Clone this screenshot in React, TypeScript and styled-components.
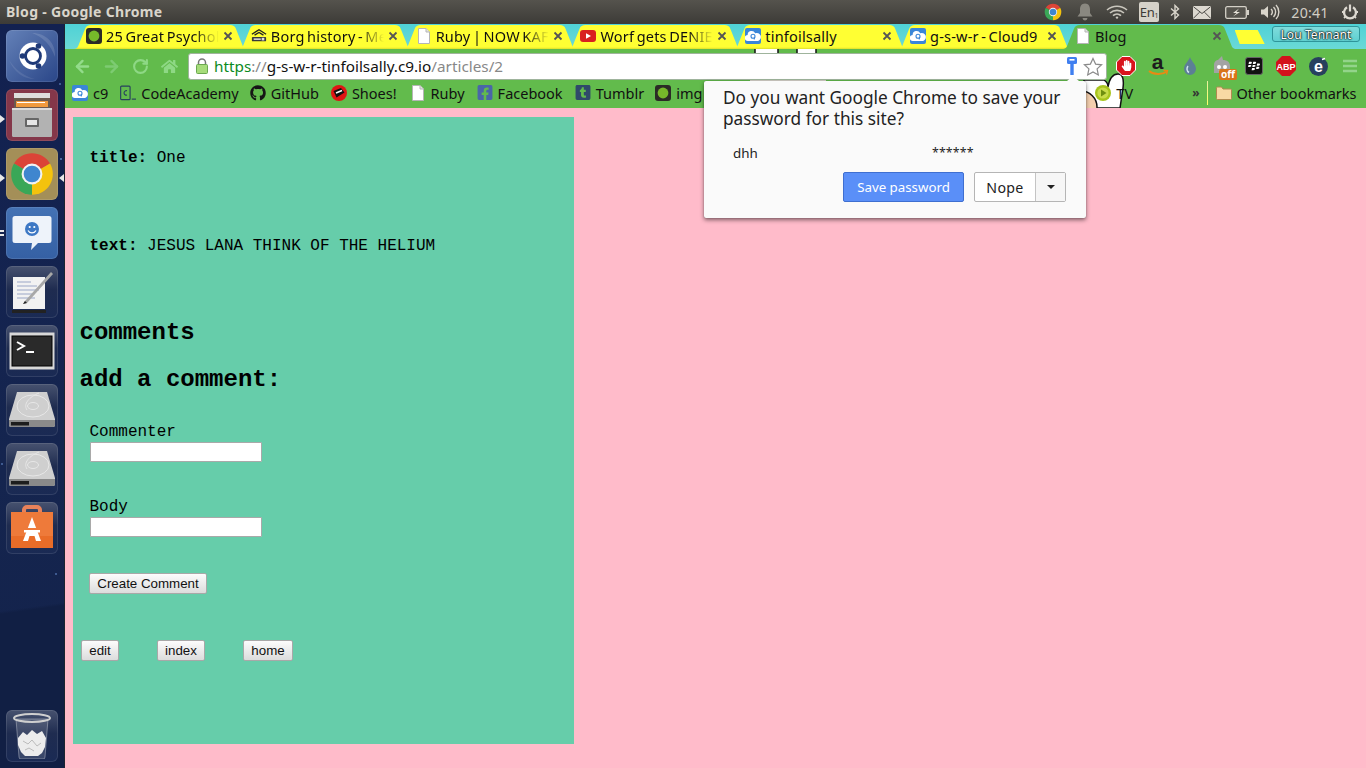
import React from "react";
import styled, { createGlobalStyle, css } from "styled-components";
import { ArrowLeft, ArrowRight, RotateCw } from "lucide-react";
import { FaGithub, FaFacebookSquare, FaTumblrSquare, FaHandPaper, FaBlackberry, FaHome } from "react-icons/fa";

const UI = `"Noto Sans", "Open Sans", sans-serif`;

const Global = createGlobalStyle`
  html, body { margin: 0; padding: 0; width: 1366px; height: 768px; overflow: hidden; background: #000; }
  * { box-sizing: border-box; }
`;

const Screen = styled.div`
  width: 1366px; height: 768px; display: flex; flex-direction: column; font-family: ${UI};
`;

/* ---------- Ubuntu top panel ---------- */
const TopPanel = styled.header`
  height: 24px; flex: none; display: flex; align-items: center; padding-left: 6px;
  background: linear-gradient(#55534d, #3c3b37);
`;
const WindowTitle = styled.div`
  font: bold 14px ${UI}; color: #d9d5cb; letter-spacing: .3px; white-space: nowrap; margin-top: -1px;
`;
const Tray = styled.div`
  margin-left: auto; display: flex; align-items: center; height: 24px;
`;
const TraySlot = styled.div<{ $w: number }>`
  width: ${p => p.$w}px; height: 24px; display: flex; align-items: center; justify-content: center; flex: none;
`;
const LangBadge = styled.div`
  width: 20px; height: 20px; border-radius: 2px; background: #d6d2c9; color: #3c3b37;
  font: 13px ${UI}; display: flex; align-items: center; justify-content: center; letter-spacing: -.3px;
`;
const LangSub = styled.span`
  font-size: 7px; align-self: flex-end; margin-bottom: 2px;
`;
const Clock = styled.div`
  font: 14.2px ${UI}; color: #d2cec4; letter-spacing: .2px;
`;

/* ---------- Launcher ---------- */
const Desktop = styled.div`
  flex: 1; display: flex; min-height: 0;
`;
const Launcher = styled.nav`
  width: 65px; flex: none; position: relative; display: flex; flex-direction: column; gap: 7px;
  padding: 6px 0 6px 6px; border-right: 1px solid #1c2430;
  background:
    radial-gradient(circle 1px at 60px 60px, #3e5a90 90%, transparent),
    radial-gradient(circle 1px at 61px 135px, #4a6aa0 90%, transparent),
    radial-gradient(circle 1px at 2px 440px, #3e5a90 90%, transparent),
    radial-gradient(circle 1px at 56px 550px, #3e5a90 90%, transparent),
    linear-gradient(172deg, transparent 78%, #111f44 78.4%),
    linear-gradient(#122150, #15254f 60%, #13224a);
`;
const TileBox = styled.div<{ $tone: string; $bottom?: boolean }>`
  width: 52px; height: 52px; flex: none; border-radius: 6px; position: relative;
  display: flex; align-items: center; justify-content: center;
  ${p => p.$bottom && css`margin-top: auto;`}
  background: ${p => p.$tone};
  box-shadow: inset 0 0 0 1px rgba(255,255,255,.1);
`;
const Pip = styled.i<{ $side: "l" | "r"; $y: number }>`
  position: absolute; top: ${p => p.$y}px; width: 0; height: 0;
  border-top: 4px solid transparent; border-bottom: 4px solid transparent;
  ${p => p.$side === "l"
    ? css`left: 0; border-left: 5px solid #e8e8e8;`
    : css`left: 59px; border-right: 5px solid #e8e8e8;`}
`;
const DotPip = styled.i<{ $y: number }>`
  position: absolute; left: 0; top: ${p => p.$y}px; width: 4px; height: 2px; background: #e8e8e8;
`;

/* ---------- Chrome frame ---------- */
const Browser = styled.main`
  flex: 1; min-width: 0; display: flex; flex-direction: column;
`;
const TabStrip = styled.div`
  height: 25px; flex: none; display: flex; align-items: flex-end; padding-left: 8px; position: relative;
  background: linear-gradient(#4fd2d6, #6ad9d6);
`;
const TabShape = styled.div<{ $active?: boolean }>`
  width: 175px; height: 24px; flex: none; margin-right: -10.2px; position: relative;
  display: flex; align-items: center; padding: 0 15px 2px 13px; gap: 4px;
  z-index: ${p => (p.$active ? 3 : 1)};
  background: ${p => (p.$active ? "#62bb4c" : "linear-gradient(#ffff33 92%, #dede2a)")};
  clip-path: path("M0 24 C4 24 5 22 6 19 L12 4 C13 1 15 0 18 0 L157 0 C160 0 162 1 163 4 L169 19 C170 22 171 24 175 24 Z");
`;
const TabIcon = styled.span`
  width: 16px; height: 16px; flex: none; display: flex; align-items: center; justify-content: center;
`;
const TabTitle = styled.span<{ $fade?: boolean }>`
  flex: 1; min-width: 0; overflow: hidden; white-space: nowrap; font-size: 14.5px; color: #101010;
  letter-spacing: .2px; word-spacing: -1.5px;
  ${p => p.$fade && css`
    -webkit-mask-image: linear-gradient(90deg, #000 78%, transparent 100%);
    mask-image: linear-gradient(90deg, #000 78%, transparent 100%);
  `}
`;
const TabClose = styled.span`
  width: 10px; height: 10px; flex: none; display: flex; align-items: center; justify-content: center;
`;
const NewTab = styled.div`
  width: 30px; height: 14px; flex: none; margin: 0 0 5px 8px; background: #ffff33; position: relative; z-index: 2;
  clip-path: polygon(0 0, 23px 0, 30px 100%, 5px 100%);
`;
const ProfileBtn = styled.div`
  margin: 0 6px 7px auto; width: 88px; height: 16px; border-radius: 3px; border: 1px solid #2f959a;
  background: linear-gradient(#7fdcdc, #5fd0d0);
  display: flex; align-items: center; justify-content: center;
  font-size: 12px; color: #fff; letter-spacing: .1px; text-shadow: 0 0 1px #000, 0 0 2px #000, 0 0 2px #000;
`;

const ThemeArea = styled.div`
  height: 59px; flex: none; position: relative; background: #62bb4c; overflow: hidden;
`;
const ThemeArt = styled.svg`
  position: absolute; left: 0; top: 0; width: 1301px; height: 59px;
`;
const Toolbar = styled.div`
  height: 32px; position: relative; display: flex; align-items: center; padding: 2px 0 0 0;
`;
const NavBtn = styled.div`
  width: 29px; height: 24px; display: flex; align-items: center; justify-content: center; flex: none;
`;
const NavGroup = styled.div`
  display: flex; padding-left: 3px; width: 123px; flex: none;
`;
const Omnibox = styled.div`
  width: 919px; height: 27px; flex: none; display: flex; align-items: center; padding: 0 2px 0 6px;
  background: #fff; border: 1px solid #9fb49c; border-radius: 3px; font-size: 15.3px; color: #111;
  white-space: nowrap;
`;
const Lock = styled.span`
  width: 14px; height: 16px; margin-right: 5px; flex: none; display: flex;
`;
const Scheme = styled.span` color: #0b8a1e; `;
const SchemeSep = styled.span` color: #888; `;
const Host = styled.span` color: #111; `;
const PathPart = styled.span` color: #888; `;
const OmniEnd = styled.div`
  margin-left: auto; display: flex; align-items: center; gap: 6px; padding-right: 1px;
`;
const KeySlot = styled.span`
  display: flex; margin-right: 0; transform: translateX(1px);
`;
const Extensions = styled.div`
  display: flex; align-items: center; margin-left: 3px;
`;
const ExtSlot = styled.div<{ $w?: number }>`
  width: ${p => p.$w ?? 32}px; height: 24px; flex: none; display: flex; align-items: center; justify-content: center; position: relative;
`;
const OffBadge = styled.span`
  position: absolute; right: 1px; bottom: -2px; background: #d9741a; color: #fff; border-radius: 2px;
  font: bold 10px/11px ${UI}; padding: 0 2px;
`;
const BookmarkBar = styled.div`
  height: 27px; position: relative; display: flex; align-items: center; padding: 0 8px 4px 7px;
`;
const Bookmark = styled.div<{ $gap?: number; $ml?: number }>`
  display: flex; align-items: center; gap: ${p => p.$gap ?? 5}px; margin-left: ${p => p.$ml ?? 0}px;
  font-size: 14.5px; color: #111; white-space: nowrap; flex: none;
`;
const BmIcon = styled.span`
  width: 16px; height: 16px; flex: none; display: flex; align-items: center; justify-content: center;
`;
const Chevron = styled.span`
  font-size: 12px; color: #333; margin-left: 59px; flex: none; font-weight: 700;
`;
const BarSep = styled.span`
  width: 1px; height: 24px; background: linear-gradient(#e8f0a0, #ffff66); margin-left: 7px; flex: none;
`;

/* ---------- Page ---------- */
const Page = styled.section`
  flex: 1; background: #ffbbca; padding: 9px 8px; min-height: 0;
  font-family: "Liberation Mono", monospace; color: #000;
`;
const Card = styled.article`
  width: 501px; height: 627px; background: #66cdaa; padding: 32px 0 0 7px;
`;
const Para = styled.p<{ $mt?: number }>`
  margin: ${p => p.$mt ?? 0}px 0 0 9.5px; font-size: 16px; line-height: 18px;
`;
const Heading = styled.h2<{ $mt: number }>`
  margin: ${p => p.$mt}px 0 0 -.5px; font-size: 24px; line-height: 27px; font-weight: 700;
`;
const Field = styled.div<{ $mt: number }>`
  margin: ${p => p.$mt}px 0 0 9.5px; display: flex; flex-direction: column; gap: 1px; align-items: flex-start;
`;
const FieldLabel = styled.label`
  font-size: 16px; line-height: 18px;
`;
const TextInput = styled.input`
  width: 172px; height: 20px; margin-left: .5px; padding: 1px 2px; background: #fff; border: 1px solid #a9a9a9; border-radius: 1px; display: block;
`;
const PageButton = styled.button<{ $w: number }>`
  width: ${p => p.$w}px; height: 21px; padding: 0; border: 1px solid #a8a8a8; border-radius: 2px; color: #111; flex: none;
  background: linear-gradient(#fcfcfc, #dcdcdc); font: 13.33px "Liberation Sans", sans-serif;
`;
const SubmitWrap = styled.div`
  margin: 36px 0 0 9px; display: flex;
`;
const ActionRow = styled.div`
  margin: 46px 0 0 1px; display: flex; gap: 38px;
`;

/* ---------- Password bubble ---------- */
const Bubble = styled.aside`
  position: absolute; left: 704px; top: 81px; width: 382px; height: 137px; z-index: 20;
  background: #fafafa; border-radius: 2px; box-shadow: 0 2px 4px rgba(0,0,0,.5), 0 0 1px rgba(0,0,0,.4);
  padding: 6px 19px 0 19px; color: #222;
`;
const BubbleArrow = styled.i`
  position: absolute; right: 7px; top: -5px; width: 0; height: 0;
  border-left: 6px solid transparent; border-right: 6px solid transparent; border-bottom: 5px solid #fafafa;
`;
const BubbleTitle = styled.div`
  font-size: 17.25px; line-height: 21px; color: #222; white-space: nowrap;
`;
const Credentials = styled.div`
  display: flex; align-items: center; font-size: 13.4px; margin: 14px 0 0 10px; height: 20px; color: #222;
`;
const CredName = styled.span` width: 199px; `;
const CredPass = styled.span` font-size: 12.4px; letter-spacing: .1px; margin-top: -2px; `;
const BubbleActions = styled.div`
  display: flex; justify-content: flex-end; margin: 9px 1px 0 0;
`;
const SaveBtn = styled.div`
  width: 121px; height: 30px; background: #5a8ff8; border: 1px solid #3f6fd0; border-radius: 2px; color: #fff;
  font-size: 13.3px; display: flex; align-items: center; justify-content: center;
`;
const SplitBtn = styled.div`
  display: flex; height: 30px; margin-left: 10px; border: 1px solid #b5b5b5; border-radius: 2px; background: #fff;
`;
const NopeBtn = styled.div`
  width: 60px; font-size: 14.2px; color: #222; display: flex; align-items: center; justify-content: center; letter-spacing: .3px;
`;
const CaretBtn = styled.div`
  width: 30px; border-left: 1px solid #c4c4c4; background: #f6f6f6; display: flex; align-items: center; justify-content: center;
`;
const Caret = styled.i`
  width: 0; height: 0; border-left: 4px solid transparent; border-right: 4px solid transparent; border-top: 4px solid #222;
`;

/* ---------- Drawn icons ---------- */
const Doc = () => (
  <svg width="14" height="16" viewBox="0 0 14 16">
    <path d="M1.5.5H9L12.5 4V15.5H1.5Z" fill="#fff" stroke="#b5b5b5" />
    <path d="M9 .5V4H12.5" fill="#e4e4e4" stroke="#b5b5b5" />
  </svg>
);
const DotFav = () => (
  <svg width="16" height="16" viewBox="0 0 16 16">
    <rect width="16" height="16" rx="3" fill="#2b2b26" />
    <circle cx="8" cy="8" r="5.4" fill="#76b82a" />
  </svg>
);
const C9 = () => (
  <svg width="16" height="16" viewBox="0 0 16 16">
    <rect width="16" height="16" rx="2" fill="#3a86d8" />
    <path d="M3 13a3 3 0 0 1-.4-6A4 4 0 0 1 10.2 5.2 3.6 3.6 0 0 1 13.2 13Z" fill="#fff" />
    <circle cx="8" cy="8.2" r="2" fill="none" stroke="#3a86d8" strokeWidth="1.1" />
    <path d="M9.7 9l-.5 2.5" stroke="#3a86d8" strokeWidth="1.1" />
  </svg>
);
const Borg = () => (
  <svg width="18" height="16" viewBox="0 0 18 16">
    <path d="M1 6 9 1l8 5M4 7l5-3 5 3" fill="none" stroke="#222" strokeWidth="1.5" />
    <rect x="1" y="9" width="16" height="5" rx="1" fill="#3a3a3a" />
    <path d="M3 11.5h8" stroke="#fff" strokeWidth="1.4" />
    <rect x="12" y="10" width="3" height="3" fill="#ddd" />
  </svg>
);
const YouTube = () => (
  <svg width="16" height="14" viewBox="0 0 16 14">
    <rect y="1" width="16" height="12" rx="3" fill="#d9201f" />
    <path d="M6 4.2 11 7 6 9.8Z" fill="#fff" />
  </svg>
);
const CloseX = () => (
  <svg width="10" height="10" viewBox="0 0 10 10">
    <path d="M1.5 1.5l7 7M8.5 1.5l-7 7" stroke="#555" strokeWidth="1.8" />
  </svg>
);
const ChromeLogo = ({ size }: { size: number }) => (
  <svg width={size} height={size} viewBox="0 0 48 48">
    <path d="M24 24 6.7 14A20 20 0 0 1 41.3 14Z" fill="#db4437" />
    <path d="M24 24 41.3 14A20 20 0 0 1 24 44Z" fill="#f4c20d" />
    <path d="M24 24 24 44A20 20 0 0 1 6.7 14Z" fill="#3aa757" />
    <circle cx="24" cy="24" r="10" fill="#f2f2f2" />
    <circle cx="24" cy="24" r="8" fill="#3f86cf" />
  </svg>
);
const Bell = () => (
  <svg width="18" height="20" viewBox="0 0 18 20">
    <path d="M9 1.5c3.6 0 5 2.8 5 6v3.5l2.5 3.5H1.5L4 11V7.5c0-3.2 1.4-6 5-6Z" fill="#8a8880" />
    <path d="M6.5 16h5a2.5 2.5 0 0 1-5 0Z" fill="#8a8880" />
  </svg>
);
const Wifi = () => (
  <svg width="22" height="14" viewBox="0 0 22 14">
    <path d="M1 5a15 15 0 0 1 20 0M4 8a10.5 10.5 0 0 1 14 0M7 10.6a6 6 0 0 1 8 0" fill="none" stroke="#c9c6bd" strokeWidth="1.6" />
    <circle cx="11" cy="12.6" r="1.2" fill="#c9c6bd" />
  </svg>
);
const Bluetooth = () => (
  <svg width="10" height="16" viewBox="0 0 10 16">
    <path d="M1 4.5 8.5 11 5 14.5V1.5L8.5 5 1 11.5" fill="none" stroke="#d9d5cb" strokeWidth="1.4" />
  </svg>
);
const Mail = () => (
  <svg width="18" height="13" viewBox="0 0 18 13">
    <rect width="18" height="13" rx="1" fill="#dcd8d0" />
    <path d="M.5.8 9 7.5 17.5.8M.5 12.2l6-6M17.5 12.2l-6-6" fill="none" stroke="#4a4844" strokeWidth="1" />
  </svg>
);
const Battery = () => (
  <svg width="24" height="13" viewBox="0 0 24 13">
    <rect x=".7" y=".7" width="20.6" height="11.6" rx="1.5" fill="#55534d" stroke="#d4d0c7" strokeWidth="1.3" />
    <rect x="22" y="4" width="2" height="5" fill="#d4d0c7" />
    <path d="M14 2.5 8 7h3.6L8 10.5 15 6h-3.6Z" fill="#e8e4da" />
  </svg>
);
const Volume = () => (
  <svg width="21" height="16" viewBox="0 0 21 16">
    <path d="M1 5.5h3L8 2v12L4 10.5H1Z" fill="#d9d5cb" />
    <path d="M11 5a4 4 0 0 1 0 6M13.5 3a7 7 0 0 1 0 10M16 1a10 10 0 0 1 0 14" fill="none" stroke="#d9d5cb" strokeWidth="1.4" />
  </svg>
);
const Power = () => (
  <svg width="18" height="18" viewBox="0 0 18 18">
    <path d="M6 4.2a6 6 0 1 0 6 0" fill="none" stroke="#dcd8d0" strokeWidth="2.4" />
    <path d="M9 1.5v7" stroke="#dcd8d0" strokeWidth="2.2" />
    <path d="M1 9H3M15 9h2M3 15l1.3-1.3M15 15l-1.3-1.3" stroke="#dcd8d0" strokeWidth="1.8" />
  </svg>
);
const Shoes = () => (
  <svg width="16" height="16" viewBox="0 0 16 16">
    <circle cx="8" cy="8" r="8" fill="#e01414" />
    <path d="M2.5 6 10 3l3.5 4.5-8 5Z" fill="#111" />
    <path d="M5 8l6-2.5" stroke="#fff" strokeWidth="1.5" />
  </svg>
);
const CodeAc = () => (
  <svg width="17" height="16" viewBox="0 0 17 16">
    <rect x=".7" y=".7" width="10" height="14.4" rx="1" fill="none" stroke="#27405e" strokeWidth="1.2" />
    <path d="M7.4 5.6a2.4 2.4 0 1 0 0 4.6" fill="none" stroke="#27405e" strokeWidth="1.2" />
    <path d="M12.5 14.5H17" stroke="#27405e" strokeWidth="1.2" />
  </svg>
);
const PlayDot = () => (
  <svg width="16" height="16" viewBox="0 0 16 16">
    <circle cx="8" cy="8" r="8" fill="#a7c41c" />
    <circle cx="8" cy="8" r="5.6" fill="#c9dc4a" />
    <path d="M6 4.5 11.5 8 6 11.5Z" fill="#6f8e10" />
  </svg>
);
const Folder = () => (
  <svg width="16" height="14" viewBox="0 0 16 14">
    <path d="M.5 2a1 1 0 0 1 1-1h4l1.5 2h7.5a1 1 0 0 1 1 1v8.5a1 1 0 0 1-1 1h-13a1 1 0 0 1-1-1Z" fill="#f8d9a4" stroke="#b08a50" />
  </svg>
);
const LockIcon = () => (
  <svg width="14" height="16" viewBox="0 0 14 16">
    <path d="M3.5 7V4.5a3.5 3.5 0 0 1 7 0V7" fill="none" stroke="#777" strokeWidth="1.5" />
    <rect x="1.5" y="6.5" width="11" height="9" rx="1" fill="#a6dc7a" stroke="#6aa84f" />
  </svg>
);
const KeyIcon = () => (
  <svg width="12" height="18" viewBox="0 0 12 18">
    <rect x="1" y="0" width="10" height="7" rx="1.5" fill="#3f7ff0" />
    <rect x="3.5" y="2" width="5" height="1.6" fill="#fff" />
    <rect x="4.3" y="6" width="3.4" height="12" fill="#3f7ff0" />
  </svg>
);
const StarIcon = () => (
  <svg width="20" height="19" viewBox="0 0 20 19">
    <path d="M10 1.5l2.6 5.6 6 .7-4.5 4.1 1.2 6-5.3-3-5.3 3 1.2-6L1.4 7.8l6-.7Z" fill="#fff" stroke="#8a8a8a" strokeWidth="1.2" />
  </svg>
);
const StopHand = () => (
  <svg width="20" height="20" viewBox="0 0 20 20">
    <path d="M6 .5h8L19.5 6v8L14 19.500H6L.5 14V6Z" fill="#d8141c" stroke="#fff" strokeWidth="1" />
  </svg>
);
const StopWrap = styled.span`
  position: relative; width: 20px; height: 20px; display: flex; align-items: center; justify-content: center;
  & > svg:last-child { position: absolute; left: 5px; top: 4px; }
`;
const Amazon = () => (
  <svg width="22" height="24" viewBox="0 0 22 24">
    <text x="10.500" y="15" textAnchor="middle" fontFamily="Liberation Sans" fontWeight="700" fontSize="21" fill="#1c1c1c">a</text>
    <path d="M2 17c5 4 13 4 18 .5" fill="none" stroke="#e98a13" strokeWidth="2" />
    <path d="M16.500 16.500 20.500 16.600 19.500 20.500" fill="none" stroke="#e98a13" strokeWidth="1.3" />
  </svg>
);
const Drop = () => (
  <svg width="12" height="18" viewBox="0 0 12 18">
    <path d="M6 0c1 4 6 7 6 12a6 6 0 0 1-12 0C0 7 5 4 6 0Z" fill="#5c7f96" />
    <path d="M4 9c-1.500 2-1.500 5 1 6.500" stroke="#cde2ee" strokeWidth="1.500" fill="none" />
  </svg>
);
const Ghost = () => (
  <svg width="18" height="20" viewBox="0 0 18 20">
    <path d="M1 17V9c0-4 3-5 4-5l4-4 1 4c4 0 7 2 7 6v7Z" fill="#a3a3a3" />
    <circle cx="6" cy="11" r="2" fill="#fff" />
    <circle cx="12" cy="11" r="2" fill="#fff" />
    <path d="M6 14.500c2 1.500 4 1.500 6 0" stroke="#fff" strokeWidth="1.200" fill="none" />
  </svg>
);
const BbBox = styled.span`
  width: 18px; height: 18px; border-radius: 3px; background: #111; border: 1px solid #666; color: #fff;
  display: flex; align-items: center; justify-content: center;
`;
const AbpIcon = () => (
  <svg width="20" height="20" viewBox="0 0 20 20">
    <path d="M6 0h8l6 6v8l-6 6H6l-6-6V6Z" fill="#d3121c" />
    <text x="10" y="13.500" textAnchor="middle" fontFamily="Liberation Sans" fontWeight="700" fontSize="9" fill="#fff">ABP</text>
  </svg>
);
const EIcon = () => (
  <svg width="19" height="19" viewBox="0 0 19 19">
    <circle cx="9.500" cy="9.500" r="9.500" fill="#27405e" />
    <text x="9.500" y="15" textAnchor="middle" fontFamily="Liberation Sans" fontWeight="700" fontSize="16" fill="#fff">e</text>
    <path d="M13 2.500l3-1" stroke="#fff" strokeWidth="1.500" />
  </svg>
);
const MenuBars = () => (
  <svg width="14" height="14" viewBox="0 0 14 14">
    <path d="M0 2h14M0 7h14M0 12h14" stroke="#93d48a" strokeWidth="2.500" />
  </svg>
);

/* launcher artwork */
const UbuntuArt = () => (
  <svg width="52" height="52" viewBox="0 0 52 52">
    <path d="M26 3c14 0 24 10 23 24-4-12-12-20-23-24Z" fill="#ffffff22" />
    <path d="M3 30c5 12 14 19 26 19C17 46 9 39 3 30Z" fill="#ffffff18" />
    <circle cx="27" cy="26" r="13.500" fill="#fff" />
    <circle cx="27" cy="26" r="7.500" fill="none" stroke="#1f3a78" strokeWidth="2.800" />
    <circle cx="32.500" cy="16" r="2.800" fill="#1f3a78" />
    <circle cx="16.500" cy="26" r="2.800" fill="#1f3a78" />
    <circle cx="32.500" cy="36" r="2.800" fill="#1f3a78" />
  </svg>
);
const FilesArt = () => (
  <svg width="42" height="46" viewBox="0 0 42 46">
    <path d="M3 1h36v9H3Z" fill="#dedede" />
    <rect x="3" y="6" width="36" height="11" fill="#6b5a50" />
    <rect x="5" y="9" width="32" height="6" fill="#f09a3e" />
    <path d="M6 10.500h28" stroke="#fff" strokeWidth="1" />
    <rect x="1" y="16" width="40" height="29" rx="1.500" fill="#b2b2b2" />
    <rect x="1" y="16" width="40" height="2" fill="#dcdcdc" />
    <rect x="14" y="26" width="14" height="9" rx="1" fill="#666" />
    <rect x="16" y="28" width="10" height="5" fill="#e6e6e6" />
  </svg>
);
const ChatArt = () => (
  <svg width="40" height="36" viewBox="0 0 40 36">
    <path d="M3 1h34a2.500 2.500 0 0 1 2.500 2.500v22a2.500 2.500 0 0 1-2.500 2.500H26l-7 7 1-7H3a2.500 2.500 0 0 1-2.500-2.500V3.500A2.500 2.500 0 0 1 3 1Z" fill="#eef3fa" />
    <circle cx="20" cy="14" r="7" fill="#3d78c4" />
    <circle cx="17.700" cy="12" r="1.100" fill="#fff" />
    <circle cx="22.300" cy="12" r="1.100" fill="#fff" />
    <path d="M16 15.500a4.500 4.500 0 0 0 8 0" fill="none" stroke="#fff" strokeWidth="1.200" />
  </svg>
);
const EditorArt = () => (
  <svg width="46" height="46" viewBox="0 0 46 46">
    <rect x="4" y="8" width="32" height="32" fill="#f2f2f2" />
    <path d="M8 13h14M8 17h20M8 21h22M8 25h15M8 29h18" stroke="#9aa6c6" strokeWidth="1.100" />
    <path d="M3 41h34v3H3Z" fill="#222" />
    <path d="M16 32 42 3l2 2-26 29-4 1Z" fill="#a8a8a8" />
    <path d="M16 32l2 2-4 1Z" fill="#222" />
  </svg>
);
const TerminalArt = () => (
  <svg width="46" height="38" viewBox="0 0 46 38">
    <rect x=".5" y=".5" width="45" height="37" fill="#d8d8d8" />
    <rect x="3" y="4" width="40" height="30" fill="#2a2a2a" stroke="#000" />
    <path d="M8 10l7 4-7 4" fill="none" stroke="#fff" strokeWidth="2" />
    <path d="M17 20h8" stroke="#fff" strokeWidth="2" />
  </svg>
);
const DiskArt = () => (
  <svg width="46" height="36" viewBox="0 0 46 36">
    <path d="M8 0h30l8 27v6a2 2 0 0 1-2 2H2a2 2 0 0 1-2-2v-6Z" fill="#cfcfcf" />
    <ellipse cx="24" cy="14" rx="16" ry="11" fill="none" stroke="#e7e7e7" />
    <ellipse cx="24" cy="14" rx="5.500" ry="3.500" fill="none" stroke="#e7e7e7" />
    <path d="M0 28h46v5a2 2 0 0 1-2 2H2a2 2 0 0 1-2-2Z" fill="#8a8a8a" />
    <rect x="2" y="30" width="18" height="3.500" fill="#1d1d1d" />
    <path d="M30 1C20 5 14 12 18 18" fill="none" stroke="#e7e7e7" />
  </svg>
);
const StoreArt = () => (
  <svg width="42" height="48" viewBox="0 0 42 48">
    <path d="M13 12V6a3 3 0 0 1 3-3h10a3 3 0 0 1 3 3v6" fill="none" stroke="#e8825a" strokeWidth="4" />
    <rect y="8" width="42" height="36" fill="#ee7a3a" />
    <rect y="32" width="42" height="12" fill="#e96c28" />
    <path d="M21 13l-9 24h5l1.500-5h5l1.500 5h5Z" fill="#fff" />
    <rect x="12" y="24" width="18" height="3" fill="#ee7a3a" />
    <rect x="13" y="26" width="16" height="2.500" fill="#fff" />
  </svg>
);
const TrashArt = () => (
  <svg width="38" height="46" viewBox="0 0 38 46">
    <path d="M3 6h32l-3 38a2 2 0 0 1-2 2H8a2 2 0 0 1-2-2Z" fill="#ffffff22" stroke="#ffffff55" />
    <ellipse cx="19" cy="5" rx="18" ry="4" fill="none" stroke="#cfcfcf" strokeWidth="2" />
    <path d="M5 25l5-6 4 3 5-5 5 4 5-3 4 7-1 9-3 6-4 3H12l-4-4-3-7Z" fill="#ececec" />
    <path d="M10 28l5 3 4-4 5 6 4-3M12 37l4-2 5 3" fill="none" stroke="#bbb" />
  </svg>
);

const tones = {
  ubuntu: "linear-gradient(135deg, #6481b8, #2a4688)",
  files: "#84374a",
  chrome: "#a48f58",
  chat: "linear-gradient(#4472b4, #3560a4)",
  dark: "linear-gradient(#47526f, #1f2c50 45%, #1a2a54)",
};

const Tile = ({ tone, bottom, children }: { tone: string; bottom?: boolean; children: React.ReactNode }) => (
  <TileBox $tone={tone} $bottom={bottom}>{children}</TileBox>
);

const tabs = [
  { title: "25 Great Psychologists", icon: <DotFav />, fade: true },
  { title: "Borg history - Memory Alpha", icon: <Borg />, fade: true },
  { title: "Ruby | NOW KAFKA", icon: <Doc />, fade: true },
  { title: "Worf gets DENIED", icon: <YouTube />, fade: true },
  { title: "tinfoilsally", icon: <C9 />, fade: false },
  { title: "g-s-w-r - Cloud9", icon: <C9 />, fade: false },
  { title: "Blog", icon: <Doc />, fade: false, active: true },
];

const bookmarks = [
  { label: "c9", icon: <C9 />, ml: 0 },
  { label: "CodeAcademy", icon: <CodeAc />, ml: 12 },
  { label: "GitHub", icon: <FaGithub size={16} color="#161616" />, ml: 11 },
  { label: "Shoes!", icon: <Shoes />, ml: 12 },
  { label: "Ruby", icon: <Doc />, ml: 13 },
  { label: "Facebook", icon: <FaFacebookSquare size={17} color="#4a66a8" />, ml: 12 },
  { label: "Tumblr", icon: <FaTumblrSquare size={17} color="#2f4a6a" />, ml: 12 },
  { label: "img", icon: <DotFav />, ml: 11 },
];

export default function App() {
  return (
    <Screen>
      <Global />
      <TopPanel>
        <WindowTitle>Blog - Google Chrome</WindowTitle>
        <Tray>
          <TraySlot $w={32}><ChromeLogo size={20} /></TraySlot>
          <TraySlot $w={32}><Bell /></TraySlot>
          <TraySlot $w={32}><Wifi /></TraySlot>
          <TraySlot $w={32}><LangBadge>En<LangSub>1</LangSub></LangBadge></TraySlot>
          <TraySlot $w={20}><Bluetooth /></TraySlot>
          <TraySlot $w={34}><Mail /></TraySlot>
          <TraySlot $w={36}><Battery /></TraySlot>
          <TraySlot $w={31}><Volume /></TraySlot>
          <TraySlot $w={48}><Clock>20:41</Clock></TraySlot>
          <TraySlot $w={32}><Power /></TraySlot>
        </Tray>
      </TopPanel>
      <Desktop>
        <Launcher>
          <Tile tone={tones.ubuntu}><UbuntuArt /></Tile>
          <Tile tone={tones.files}><FilesArt /></Tile>
          <Tile tone={tones.chrome}><ChromeLogo size={50} /></Tile>
          <Tile tone={tones.chat}><ChatArt /></Tile>
          <Tile tone={tones.dark}><EditorArt /></Tile>
          <Tile tone={tones.dark}><TerminalArt /></Tile>
          <Tile tone={tones.dark}><DiskArt /></Tile>
          <Tile tone={tones.dark}><DiskArt /></Tile>
          <Tile tone={tones.dark}><StoreArt /></Tile>
          <Tile tone={tones.dark} bottom><TrashArt /></Tile>
          <Pip $side="l" $y={91} />
          <Pip $side="l" $y={150} />
          <Pip $side="r" $y={150} />
          <DotPip $y={206} />
          <DotPip $y={210} />
        </Launcher>
        <Browser>
          <TabStrip>
            {tabs.map(t => (
              <TabShape key={t.title} $active={t.active}>
                <TabIcon>{t.icon}</TabIcon>
                <TabTitle $fade={t.fade}>{t.title}</TabTitle>
                <TabClose><CloseX /></TabClose>
              </TabShape>
            ))}
            <NewTab />
            <ProfileBtn>Lou Tennant</ProfileBtn>
          </TabStrip>
          <ThemeArea>
            <ThemeArt viewBox="65 49 1301 59">
              <rect x="755" y="49" width="23" height="6" fill="#fff" />
              <rect x="797" y="49" width="19" height="6" fill="#fff" />
              <path d="M755 49v6M778 49v6M797 49v6M816 49v6" stroke="#111" strokeWidth="1.500" />
              <path d="M750 80h76v3h-76Z" fill="#d8d4cc" />
              <path d="M1084 80h20c3 2 4 5 4 7 1-6 4-13 10-13 5 0 6 6 5 14l-3 20h-36Z" fill="#fff" stroke="#111" strokeWidth="1.500" />
              <circle cx="1081" cy="107" r="16" fill="#f4cfae" stroke="#111" strokeWidth="1.500" />
            </ThemeArt>
            <Toolbar>
              <NavGroup>
                <NavBtn><ArrowLeft size={19} color="#93dc8b" strokeWidth={3} /></NavBtn>
                <NavBtn><ArrowRight size={19} color="#7dcb72" strokeWidth={3} /></NavBtn>
                <NavBtn><RotateCw size={17} color="#8ed885" strokeWidth={3} /></NavBtn>
                <NavBtn><FaHome size={17} color="#8ed885" /></NavBtn>
              </NavGroup>
              <Omnibox>
                <Lock><LockIcon /></Lock>
                <Scheme>https</Scheme><SchemeSep>://</SchemeSep><Host>g-s-w-r-tinfoilsally.c9.io</Host><PathPart>/articles/2</PathPart>
                <OmniEnd>
                  <KeySlot><KeyIcon /></KeySlot>
                  <StarIcon />
                </OmniEnd>
              </Omnibox>
              <Extensions>
                <ExtSlot><StopWrap><StopHand /><FaHandPaper size={11} color="#fff" /></StopWrap></ExtSlot>
                <ExtSlot><Amazon /></ExtSlot>
                <ExtSlot><Drop /></ExtSlot>
                <ExtSlot><Ghost /><OffBadge>off</OffBadge></ExtSlot>
                <ExtSlot><BbBox><FaBlackberry size={12} /></BbBox></ExtSlot>
                <ExtSlot><AbpIcon /></ExtSlot>
                <ExtSlot><EIcon /></ExtSlot>
                <ExtSlot><MenuBars /></ExtSlot>
              </Extensions>
            </Toolbar>
            <BookmarkBar>
              {bookmarks.map(b => (
                <Bookmark key={b.label} $ml={b.ml}>
                  <BmIcon>{b.icon}</BmIcon>
                  {b.label}
                </Bookmark>
              ))}
              <Bookmark $ml={393}>
                <BmIcon><PlayDot /></BmIcon>
                TV
              </Bookmark>
              <Chevron>»</Chevron>
              <BarSep />
              <Bookmark $ml={8}>
                <BmIcon><Folder /></BmIcon>
                Other bookmarks
              </Bookmark>
            </BookmarkBar>
          </ThemeArea>
          <Page>
            <Card>
              <Para><b>title:</b> One</Para>
              <Para $mt={70}><b>text:</b> JESUS LANA THINK OF THE HELIUM</Para>
              <Heading $mt={64}>comments</Heading>
              <Heading $mt={20}>add a comment:</Heading>
              <Field $mt={30}>
                <FieldLabel>Commenter</FieldLabel>
                <TextInput />
              </Field>
              <Field $mt={36}>
                <FieldLabel>Body</FieldLabel>
                <TextInput />
              </Field>
              <SubmitWrap><PageButton $w={118}>Create Comment</PageButton></SubmitWrap>
              <ActionRow>
                <PageButton $w={38}>edit</PageButton>
                <PageButton $w={48}>index</PageButton>
                <PageButton $w={50}>home</PageButton>
              </ActionRow>
            </Card>
          </Page>
        </Browser>
      </Desktop>
      <Bubble>
        <BubbleArrow />
        <BubbleTitle>Do you want Google Chrome to save your<br />password for this site?</BubbleTitle>
        <Credentials>
          <CredName>dhh</CredName>
          <CredPass>******</CredPass>
        </Credentials>
        <BubbleActions>
          <SaveBtn>Save password</SaveBtn>
          <SplitBtn>
            <NopeBtn>Nope</NopeBtn>
            <CaretBtn><Caret /></CaretBtn>
          </SplitBtn>
        </BubbleActions>
      </Bubble>
    </Screen>
  );
}
